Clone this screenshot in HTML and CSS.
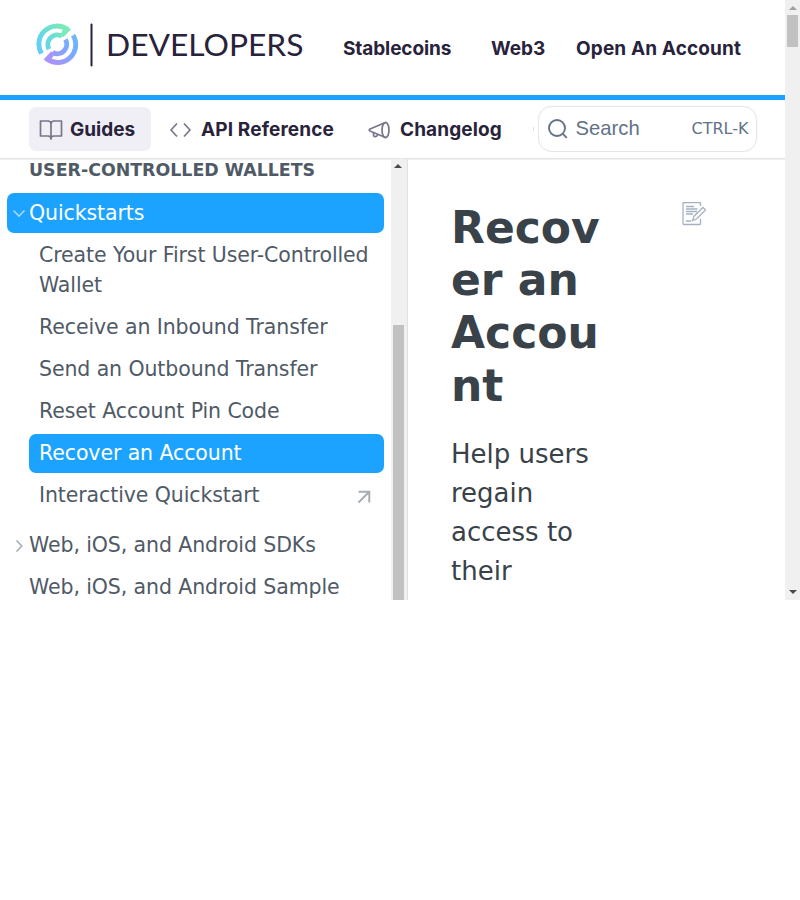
FILE: index.html
```
<!DOCTYPE html>
<html lang="en">
<head>
<meta charset="utf-8">
<title>Recover an Account</title>
<link rel="stylesheet" href="styles.css">
</head>
<body>
<div class="viewport">
  <div class="page">
    <header class="top">
      <svg class="logo" width="270" height="50" viewBox="0 0 270 50">
        <defs>
          <linearGradient id="upper" gradientUnits="userSpaceOnUse" x1="1" y1="34" x2="32" y2="8"><stop offset="0" stop-color="#62c8ff"/><stop offset=".5" stop-color="#68dcdb"/><stop offset="1" stop-color="#7cecb2"/></linearGradient>
          <linearGradient id="lower" gradientUnits="userSpaceOnUse" x1="12" y1="40" x2="40" y2="14"><stop offset="0" stop-color="#b090f8"/><stop offset=".55" stop-color="#7ca8ff"/><stop offset="1" stop-color="#68baff"/></linearGradient>
        </defs>
        <g fill="none" stroke-width="4.9">
          <g stroke="url(#upper)">
            <path d="M5.500 33.400A18 18 0 0 1 31.600 9.600"/>
            <path d="M13.100 29.100A9.500 9.500 0 0 1 26 16.100"/>
          </g>
          <path d="M30.500 6.200 35 9.200 27.600 17 24.500 15.800 25.500 12 28 8Z" fill="#79eab9"/>
          <g stroke="url(#lower)">
            <path d="M37.100 15.200A18 18 0 0 1 11 39"/>
            <path d="M29.500 19.500A9.500 9.500 0 0 1 16.600 32.500"/>
          </g>
          <path d="M12.100 42.400 7.600 39.400 15 31.600 18.100 32.800 17.100 36.600 14.600 40.600Z" fill="#a795fb"/>
        </g>
        <path d="M55.500 4.500V45.500" stroke="#28233b" stroke-width="2" stroke-linecap="round"/>
        <text class="wordmark" x="70" y="35.500" textLength="197.500" lengthAdjust="spacingAndGlyphs">DEVELOPERS</text>
      </svg>
      <nav class="links">
        <a class="link stable">Stablecoins</a>
        <a class="link web">Web3</a>
        <a class="link open">Open An Account</a>
      </nav>
    </header>
    <div class="subnav">
      <a class="tab active guides"><svg width="24" height="24" viewBox="0 0 24 24"><path d="M12 6c0-1.500-1-3-3-3H1.500v15H9c1.800 0 3 .8 3 3 0-2.200 1.200-3 3-3h7.500V3H15c-2 0-3 1.500-3 3Zm0 0v15"/></svg><span>Guides</span></a>
      <a class="tab api"><svg width="24" height="24" viewBox="0 0 24 24"><path d="m9 5.500-6 6.500 6 6.500M16 5.500l6 6.500-6 6.500"/></svg><span>API Reference</span></a>
      <a class="tab changes"><svg width="24" height="24" viewBox="0 0 24 24"><path d="M18.500 4.500 3 11q-1.500 1 0 2l15.500 6.500M6.500 14.500v2.200c0 2.500 3.500 2.500 4 .2"/><ellipse cx="18.500" cy="12" rx="3.500" ry="7.700"/></svg><span>Changelog</span></a>
      <span class="overflow-hint"></span>
      <div class="search">
        <svg width="24" height="24" viewBox="0 0 24 24"><circle cx="11" cy="11" r="8"/><path d="m16.800 16.800 4 4"/></svg>
        <span class="placeholder">Search</span><span class="shortcut">CTRL-K</span>
      </div>
    </div>
    <div class="content">
      <aside class="sidebar">
        <h2>USER-CONTROLLED WALLETS</h2>
        <a class="row selected"><svg class="chev" width="14" height="14" viewBox="0 0 14 14"><path d="m1.500 3.500 5.500 5.500L12.500 3.500"/></svg>Quickstarts</a>
        <div class="children">
          <a class="item">Create Your First User-Controlled Wallet</a>
          <a class="item">Receive an Inbound Transfer</a>
          <a class="item">Send an Outbound Transfer</a>
          <a class="item">Reset Account Pin Code</a>
          <a class="item selected">Recover an Account</a>
          <a class="item external">Interactive Quickstart<svg width="14" height="14" viewBox="0 0 14 14"><path d="M1.500 12.500 12 2M1.500 1.700H12.300V12.500"/></svg></a>
        </div>
        <a class="row"><svg class="chev" width="14" height="14" viewBox="0 0 14 14"><path d="m4.500 1.500 5.300 5.500-5.300 5.500"/></svg>Web, iOS, and Android SDKs</a>
        <a class="row">Web, iOS, and Android Sample</a>
      </aside>
      <div class="bar side"><i class="up"></i><div class="thumb"></div></div>
      <main>
        <div class="article">
          <h1>Recover an Account</h1>
          <p>Help users regain access to their</p>
        </div>
        <svg class="edit" width="24" height="24" viewBox="0 0 24 24"><path d="M18.500 4V1.500q0-1-1-1H2q-1 0-1 1v20q0 1 1 1h15.500q1 0 1-1V17M4 4.500h8M4 7h11.500M4 9.500h11M4 12h7M4 19h5M10.500 18.700l1.500-4.500 9-8.700 2.500 2.500-9 9-4 1.700Z"/></svg>
      </main>
    </div>
  </div>
  <div class="bar outer"><i class="up"></i><div class="thumb"></div><i class="down"></i></div>
</div>
</body>
</html>
```
FILE: styles.css
```
* { box-sizing: border-box; }
body { margin: 0; background: #fff; font-family: "DejaVu Sans", sans-serif; }
svg { flex: none; }
.viewport { display: flex; width: 800px; height: 600px; overflow: hidden; }
.page { display: flex; flex-direction: column; width: 785px; height: 600px; }
.top { display: flex; flex: none; height: 100px; padding: 20px 0 0 36px; border-bottom: 5px solid #1ba3ff; }
.wordmark { font: 400 31.500px Lato, sans-serif; fill: #28233b; }
.links { display: flex; margin-left: 37px; padding-top: 17px; }
.link, .tab { font: 700 19px/24px Inter, sans-serif; color: #28233b; white-space: nowrap; }
.stable { width: 148px; letter-spacing: -.1px; }
.web { width: 85px; }
.open, .api { letter-spacing: .13px; }
.subnav { display: flex; flex: none; align-items: center; height: 59px; padding-left: 29px; border-bottom: 1px solid #e3e4e6; box-shadow: 0 1px 1px #f0f0f0; }
.tab { display: flex; align-items: center; height: 44px; padding-left: 10px; border-radius: 7px; gap: 7px; }
.tab span { padding-top: 2px; }
.tab svg, .search svg { fill: none; stroke: #79758a; stroke-width: 1.700; stroke-linejoin: round; }
.tab svg { margin-top: 1px; }
.active { background: #f0eff5; }
.guides { width: 122px; }
.api { width: 199px; padding-left: 17px; gap: 9px; }
.changes { width: 170px; padding-left: 17px; gap: 9px; letter-spacing: .1px; }
.overflow-hint { width: 1px; height: 4px; margin: 0 4px 0 13px; background: #e3e4e6; }
.search { display: flex; align-items: center; width: 219px; height: 46px; margin-left: -.5px; padding: 0 7px 1px 9px; border: 1.500px solid #e5e6e8; border-radius: 14px; box-shadow: 0 0 1px #e5e6e8; }
.search svg { stroke: #637288; stroke-width: 1.900; margin-left: -2px; }
.placeholder { margin-left: 6px; font: 20.250px/24px "Liberation Sans", sans-serif; color: #637288; position: relative; top: -1px; }
.shortcut { margin-left: auto; font-size: 16px; color: #637288; }
.content { display: flex; flex: 1; min-height: 0; overflow: hidden; }
.sidebar { width: 391px; padding-left: 7px; color: #4f5a66; font-size: 20.500px; letter-spacing: -.1px; line-height: 30px; overflow: hidden; }
.sidebar h2 { margin: 0 0 12px 22px; font-size: 17.400px; letter-spacing: 0; line-height: 22px; white-space: nowrap; }
.row { display: flex; align-items: center; position: relative; width: 377px; height: 40px; padding-left: 22px; margin-bottom: 2px; border-radius: 7px; white-space: nowrap; }
.chev { position: absolute; left: 5px; top: 14px; }
.chev, .external svg { fill: none; stroke: #a7adb3; stroke-width: 1.600; }
.selected { background: #1ba3ff; color: #fff; }
.selected .chev { stroke: #a4daff; }
.children { display: flex; flex-direction: column; gap: 3px; margin: 3px 7px 10px 22px; }
.item { display: block; padding: 4px 10px 5px; border-radius: 7px; }
.external { display: flex; align-items: center; justify-content: space-between; padding-right: 13px; }
.external svg { stroke-width: 2; margin-top: 3px; }
.bar { position: relative; flex: none; width: 15px; height: 600px; background: #f0f0f0; }
.bar .thumb { position: absolute; left: 2px; width: 11px; background: #c1c1c1; }
.side { width: 17px; height: 441px; border-right: 1px solid #dfe1e3; }
.side .thumb { top: 166px; height: 275px; }
.outer .thumb { top: 15px; height: 32px; }
.up, .down { position: absolute; left: 4px; width: 0; border: 4px solid transparent; }
.up { top: 1px; border-bottom-color: #4a4a4a; }
.side .up { left: 3px; }
.outer .up { top: 2px; border-bottom-color: #a0a0a0; }
.down { bottom: 2px; border-top-color: #4a4a4a; }
main { display: flex; padding: 42.600px 0 0 43px; color: #384248; }
.article { width: 154px; }
h1 { margin: 0; font-size: 44px; line-height: 52.800px; overflow-wrap: anywhere; }
p { margin: 22.400px 0 0; font-size: 26px; line-height: 39px; }
.edit { margin-left: 77px; margin-top: .4px; fill: none; stroke: #a5b1c2; stroke-width: 1.300; }
```
